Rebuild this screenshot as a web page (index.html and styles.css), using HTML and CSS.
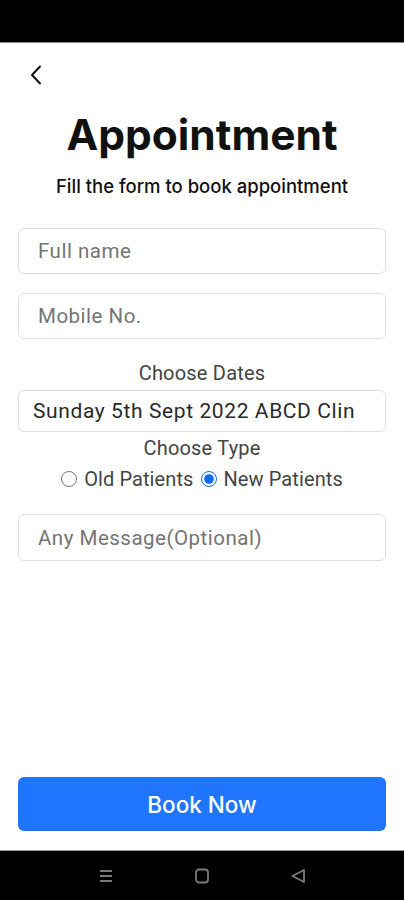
FILE: index.html
```html
<!DOCTYPE html>
<html lang="en">
<head>
    <meta charset="UTF-8">
    <meta name="viewport" content="width=device-width, initial-scale=1.0">
    <title>Appointment</title>
    <link rel="stylesheet" href="styles.css">
</head>
<body>
    <div class="screen">
        <div class="status-bar"></div>

        <main class="page">
            <a class="back" href="#">
                <svg width="12" height="20" viewBox="0 0 12 20">
                    <path d="M10 1.5 L2 10 L10 18.5" fill="none" stroke="#111" stroke-width="2" stroke-linecap="round" stroke-linejoin="round"/>
                </svg>
            </a>

            <h1 class="title">Appointment</h1>
            <p class="subtitle">Fill the form to book appointment</p>

            <form class="form">
                <input class="field" type="text" placeholder="Full name">
                <input class="field gap" type="text" placeholder="Mobile No.">

                <div class="label label-dates">Choose Dates</div>
                <div class="select"><span class="select-text">Sunday 5th Sept 2022 ABCD Clinic</span></div>

                <div class="label label-type">Choose Type</div>
                <div class="radios">
                    <label><input type="radio" name="type"> Old Patients</label>
                    <label><input type="radio" name="type" checked> New Patients</label>
                </div>

                <input class="field message" type="text" placeholder="Any Message(Optional)">
            </form>

            <button class="book" type="button">Book Now</button>
        </main>

        <nav class="nav-bar">
            <svg width="16" height="16" viewBox="0 0 16 16">
                <path d="M2 3 H14 M2 8 H14 M2 13 H14" stroke="#7a7a7a" stroke-width="2"/>
            </svg>
            <svg width="16" height="16" viewBox="0 0 16 16">
                <rect x="2" y="1.5" width="12" height="13" rx="3" fill="none" stroke="#7a7a7a" stroke-width="1.8"/>
            </svg>
            <svg width="16" height="16" viewBox="0 0 16 16">
                <path d="M14 2 L2.5 8 L14 14 Z" fill="none" stroke="#7a7a7a" stroke-width="1.8" stroke-linejoin="round"/>
            </svg>
        </nav>
    </div>
</body>
</html>
```

FILE: styles.css
```css
body {
    margin: 0;
    padding: 0;
    background-color: white;
    font-family: Inter, "Noto Sans", sans-serif;
    color: #111;
}
.screen {
    display: flex;
    flex-direction: column;
    height: 900px;
}
.status-bar {
    height: 42px;
    background-color: black;
    border-bottom: 1px solid #8a8a8a;
}
.page {
    flex: 1;
    display: flex;
    flex-direction: column;
    padding: 0 18px;
}
.back {
    display: flex;
    padding: 22px 0 0 12px;
    width: 12px;
}
.title {
    margin: 25px 0 0;
    font-size: 42.5px;
    line-height: 50px;
    font-weight: 700;
    text-align: center;
}
.subtitle {
    margin: 14px 0 0;
    font-size: 18.5px;
    line-height: 24px;
    font-weight: 500;
    text-align: center;
}
.form {
    display: flex;
    flex-direction: column;
    margin-top: 30px;
}
.field {
    height: 46px;
    box-sizing: border-box;
    border: 1px solid #dcdfe3;
    border-radius: 6px;
    padding: 0 19px;
    font-family: Roboto, "Liberation Sans", sans-serif;
    font-size: 20.5px;
    letter-spacing: 0.5px;
    color: #333;
    outline: none;
}
.field::placeholder {
    color: #747474;
}
.gap {
    margin-top: 19px;
}
.label {
    font-family: Roboto, "Liberation Sans", sans-serif;
    font-size: 20px;
    letter-spacing: 0.2px;
    line-height: 24px;
    color: #444;
    text-align: center;
}
.label-dates {
    margin-top: 22px;
}
.select {
    margin-top: 5px;
    height: 42px;
    box-sizing: border-box;
    border: 1px solid #dcdfe3;
    border-radius: 6px;
    padding: 0 30px 0 14px;
    font-family: Roboto, "Liberation Sans", sans-serif;
    font-size: 21px;
    letter-spacing: 0.6px;
    line-height: 40px;
    color: #2a2a2a;
}
.select-text {
    display: block;
    white-space: nowrap;
    overflow: hidden;
}
.label-type {
    margin-top: 4px;
}
.radios {
    display: flex;
    justify-content: center;
    gap: 7px;
    margin-top: 7px;
    font-family: Roboto, "Liberation Sans", sans-serif;
    font-size: 20px;
    letter-spacing: 0.1px;
    line-height: 24px;
    color: #444;
}
.radios label {
    display: flex;
    align-items: center;
    gap: 7px;
}
.radios input {
    width: 16px;
    height: 16px;
    margin: 0;
    accent-color: #0a6cf5;
}
.message {
    margin-top: 23px;
    height: 47px;
}
.book {
    margin-top: auto;
    margin-bottom: 19px;
    height: 54px;
    border: none;
    border-radius: 6px;
    background-color: #1f75fe;
    color: white;
    font-family: Inter, "Noto Sans", sans-serif;
    font-size: 22.5px;
    font-weight: 500;
}
.nav-bar {
    height: 49px;
    background-color: black;
    border-top: 1px solid #9a9a9a;
    display: flex;
    justify-content: center;
    align-items: center;
    gap: 80px;
}
```
